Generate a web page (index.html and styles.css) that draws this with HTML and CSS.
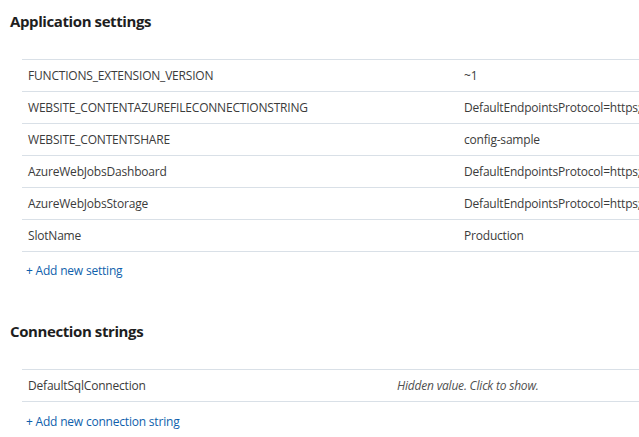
FILE: index.html
```html
<!DOCTYPE html>
<html>
<head>
<meta charset="utf-8">
<link rel="stylesheet" href="styles.css">
</head>
<body>
<section class="section">
  <h2 class="title">Application settings</h2>
  <div class="table table-app">
    <div class="row"><div class="cell">FUNCTIONS_EXTENSION_VERSION</div><div class="cell">~1</div></div>
    <div class="row"><div class="cell">WEBSITE_CONTENTAZUREFILECONNECTIONSTRING</div><div class="cell">DefaultEndpointsProtocol=https;AccountName=configsample</div></div>
    <div class="row"><div class="cell">WEBSITE_CONTENTSHARE</div><div class="cell">config-sample</div></div>
    <div class="row"><div class="cell">AzureWebJobsDashboard</div><div class="cell">DefaultEndpointsProtocol=https;AccountName=configsample</div></div>
    <div class="row"><div class="cell">AzureWebJobsStorage</div><div class="cell">DefaultEndpointsProtocol=https;AccountName=configsample</div></div>
    <div class="row"><div class="cell">SlotName</div><div class="cell">Production</div></div>
  </div>
  <a class="add" href="#">+ Add new setting</a>
</section>
<section class="section section-conn">
  <h2 class="title">Connection strings</h2>
  <div class="table table-conn">
    <div class="row"><div class="cell">DefaultSqlConnection</div><div class="cell hidden">Hidden value. Click to show.</div></div>
  </div>
  <a class="add" href="#">+ Add new connection string</a>
</section>
</body>
</html>
```
FILE: styles.css
```css
html, body {
  margin: 0;
  padding: 0;
  background: #fff;
  overflow: hidden;
}
body {
  font-family: "Open Sans", "Noto Sans", sans-serif;
  font-size: 12px;
  letter-spacing: -0.2px;
  color: #3b3b3b;
  width: 639px;
  height: 437px;
}
.section {
  display: flex;
  flex-direction: column;
  padding-left: 10px;
}
.title {
  margin: 0;
  padding-top: 11px;
  font-size: 15px;
  font-weight: 700;
  letter-spacing: -0.4px;
  line-height: 20px;
  color: #1e1e1e;
}
.table {
  margin-top: 28px;
  margin-left: 12px;
  width: 800px;
  border-top: 1px solid #d9e0e7;
}
.row {
  display: grid;
  height: 31px;
  border-bottom: 1px solid #d9e0e7;
  align-items: center;
}
.table-app .row { grid-template-columns: 436px 1fr; }
.table-conn .row { grid-template-columns: 369px 1fr; }
.cell {
  padding-left: 6px;
  white-space: nowrap;
  overflow: hidden;
}
.hidden { font-style: italic; color: #505050; }
.add {
  margin-left: 16px;
  margin-top: 10px;
  line-height: 18px;
  color: #0f5fac;
  text-decoration: none;
  align-self: flex-start;
}
.section-conn .title { padding-top: 41px; }
.section-conn .add { margin-top: 11px; }
```
